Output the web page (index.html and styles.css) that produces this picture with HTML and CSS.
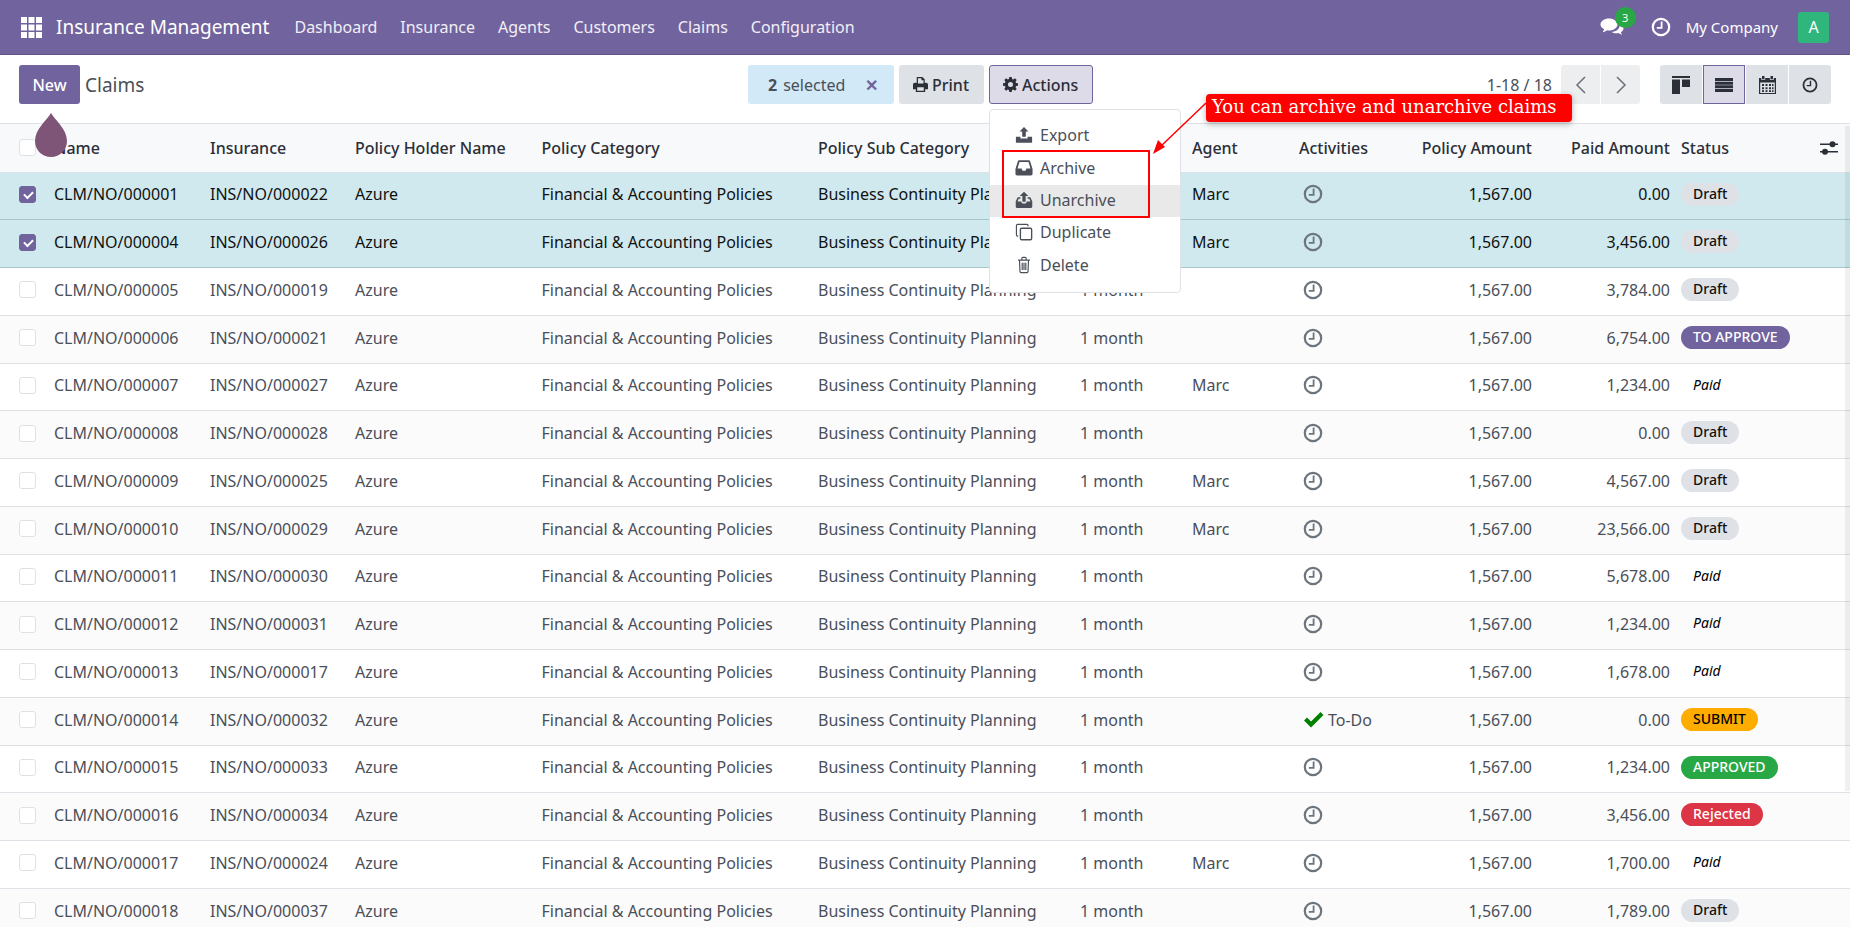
FILE: index.html
```html
<!DOCTYPE html>
<html lang="en">
<head>
    <meta charset="UTF-8">
    <title>Claims - Insurance Management</title>
    <link rel="stylesheet" href="styles.css">
</head>
<body>

<svg class="icon-defs" width="0" height="0">
    <symbol id="i-clock" viewBox="0 0 20 20"><circle cx="10" cy="10" r="8.2" fill="none" stroke="currentColor" stroke-width="2.2"/><path d="M10.600 4.600v6.200H5.800" fill="none" stroke="currentColor" stroke-width="1.800"/></symbol>
    <symbol id="i-export" viewBox="0 0 20 20"><path fill="currentColor" d="M10 1l5 5h-3v6H8V6H5zM1 12h5v2h8v-2h5v6.500H1z"/></symbol>
    <symbol id="i-archive" viewBox="0 0 20 20"><path fill="currentColor" fill-rule="evenodd" d="M5 1.500h10c1 0 1.500.5 2 1.500l2.500 8v5.500c0 1-.8 1.800-1.800 1.800H2.300c-1 0-1.800-.8-1.800-1.800V11L3 3c.4-1 1-1.500 2-1.500zM5 3.300L2.800 10.500h4.400l1.300 2.500h3l1.300-2.500h4.400L15 3.300z"/></symbol>
    <symbol id="i-unarchive" viewBox="0 0 20 20"><path fill="currentColor" d="M10 .8l4.800 4.700h-3V12H8.200V5.500h-3zM.8 11.500L3 7h3v1.700H4.200l-1.500 3h4.100l1.300 2.300h3.800l1.300-2.300h4.100l-1.500-3H14V7h3l2.200 4.500v5.800c0 .9-.8 1.700-1.700 1.700h-15c-.9 0-1.700-.8-1.700-1.700z"/></symbol>
    <symbol id="i-copy" viewBox="0 0 20 20"><path fill="none" stroke="currentColor" stroke-width="1.300" d="M14.500 3.500V2.800c0-.7-.5-1.200-1.200-1.200H3c-.8 0-1.400.6-1.400 1.400v10.300c0 .7.500 1.200 1.200 1.200h.8"/><rect x="6" y="5.800" width="12.500" height="12.800" rx="1.400" fill="none" stroke="currentColor" stroke-width="1.500"/></symbol>
    <symbol id="i-trash" viewBox="0 0 20 20"><path fill="none" stroke="currentColor" stroke-width="1.300" d="M3.500 4.500h13M5 4.500l.5 12.500c0 .9.500 1.500 1.300 1.500h6.400c.8 0 1.300-.6 1.300-1.500l.5-12.500M7.600 4.500V2.800c0-.7.400-1.200.9-1.200h3c.5 0 .9.500.9 1.200v1.700M8 7.500v8M10 7.500v8M12 7.500v8"/></symbol>
</svg>

<header class="navbar">
    <svg class="apps-icon" width="21" height="21" viewBox="0 0 21 21"><path fill="#fff" d="M0 0h6v6H0zM7.500 0h6v6h-6zM15 0h6v6h-6zM0 7.500h6v6H0zM7.500 7.500h6v6h-6zM15 7.500h6v6h-6zM0 15h6v6H0zM7.500 15h6v6h-6zM15 15h6v6h-6z"/></svg>
    <span class="brand">Insurance Management</span>
    <nav class="menu">
        <a>Dashboard</a>
        <a>Insurance</a>
        <a>Agents</a>
        <a>Customers</a>
        <a>Claims</a>
        <a>Configuration</a>
    </nav>
    <div class="systray">
        <span class="chat">
            <svg width="24" height="20" viewBox="0 0 24 20"><path fill="#fff" d="M9 1.500c4.700 0 8.500 2.700 8.500 6s-3.800 6-8.500 6c-.7 0-1.400-.1-2-.2-1.200 1-2.700 1.700-4.500 1.900.8-.9 1.400-1.900 1.700-3C2 11.100.5 9.400.5 7.500c0-3.300 3.800-6 8.500-6z"/><path fill="#fff" d="M19 6.500c2.700.8 4.500 2.700 4.500 4.800 0 1.600-1 3-2.700 4 .2.900.8 1.800 1.500 2.500-1.600-.2-2.900-.8-3.900-1.700-.6.100-1.300.2-1.900.2-1.900 0-3.600-.5-4.900-1.300 4.700-.3 8-3.100 8-6.500 0-.9-.2-1.700-.6-2.500z"/></svg>
            <span class="chat-badge">3</span>
        </span>
        <svg class="systray-clock" width="20" height="20"><use href="#i-clock"/></svg>
        <span class="company">My Company</span>
        <span class="avatar">A</span>
    </div>
</header>

<section class="control-panel">
    <div class="cp-left">
        <button class="btn btn-new">New</button>
        <span class="crumb">Claims</span>
    </div>
    <div class="cp-middle">
        <div class="selected-box"><b>2</b> selected <span class="selected-x">✕</span></div>
        <button class="btn btn-gray">
            <svg width="15" height="15" viewBox="0 0 16 16"><path fill="currentColor" fill-rule="evenodd" d="M4 0h6l2.500 2.500V6H14c1.100 0 2 .9 2 2v5h-3v3H3v-3H0V8c0-1.100.9-2 2-2h2zM5.300 1.300V7h5.900V3.500H9V1.300zM4.500 11v3.700h7V11z"/></svg>
            Print
        </button>
        <button class="btn btn-actions">
            <svg width="15" height="15" viewBox="0 0 16 16"><path fill="currentColor" fill-rule="evenodd" d="M6.700 0h2.600l.4 2.100 1.200.5L12.700 1.400l1.900 1.900-1.200 1.800.5 1.200 2.100.4v2.600l-2.100.4-.5 1.200 1.200 1.800-1.900 1.900-1.800-1.200-1.200.5-.4 2.100H6.700l-.4-2.100-1.200-.5-1.800 1.200-1.900-1.900 1.200-1.800-.5-1.200L0 9.300V6.700l2.100-.4.5-1.200-1.200-1.800 1.900-1.900 1.800 1.200 1.200-.5zM8 5.300a2.700 2.700 0 1 0 0 5.400 2.700 2.700 0 0 0 0-5.400z"/></svg>
            Actions
        </button>
    </div>
    <div class="cp-right">
        <span class="pager-text">1-18 / 18</span>
        <div class="pager">
            <button><svg width="12" height="20" viewBox="0 0 12 20"><path d="M10 2L2 10l8 8" fill="none" stroke="currentColor" stroke-width="1.500"/></svg></button>
            <button><svg width="12" height="20" viewBox="0 0 12 20"><path d="M2 2l8 8-8 8" fill="none" stroke="currentColor" stroke-width="1.500"/></svg></button>
        </div>
        <div class="views">
            <button><svg width="18" height="18" viewBox="0 0 18 18"><path fill="currentColor" d="M0 0h18v2H0zM0 3.500h8V18H0zM10 3.500h8V11h-8z"/></svg></button>
            <button class="active"><svg width="18" height="14" viewBox="0 0 18 14"><path fill="currentColor" d="M0 0h18v3H0zM0 3.700h18v3H0zM0 7.300h18v3H0zM0 11h18v3H0z"/></svg></button>
            <button><svg width="17" height="18" viewBox="0 0 17 18"><path fill="currentColor" fill-rule="evenodd" d="M3 0h2.500v3H3zM11.500 0H14v3h-2.500zM0 2h2.200v1.800h4V2h4.600v1.800h4V2H17v16H0zM1.200 6.500V17h14.600V6.500zM3 8h2v2H3zM6.500 8h2v2h-2zM10 8h2v2h-2zM13 8h1.500v2H13zM3 11.200h2v2H3zM6.500 11.200h2v2h-2zM10 11.200h2v2h-2zM13 11.200h1.500v2H13zM3 14.300h2v1.700H3zM6.500 14.300h2v1.700h-2zM10 14.300h2v1.700h-2zM13 14.300h1.500v1.700H13z"/></svg></button>
            <button><svg width="16" height="16"><use href="#i-clock"/></svg></button>
        </div>
    </div>
</section>

<main class="list-wrap">
    <table class="list">
        <colgroup>
            <col class="c-check"><col class="c-name"><col class="c-ins"><col class="c-holder"><col class="c-cat"><col class="c-sub"><col class="c-period"><col class="c-agent"><col class="c-act"><col class="c-amount"><col class="c-paid"><col>
        </colgroup>
        <thead>
            <tr>
                <th class="check-cell"><span class="check"></span></th>
                <th>Name</th>
                <th>Insurance</th>
                <th>Policy Holder Name</th>
                <th>Policy Category</th>
                <th>Policy Sub Category</th>
                <th>Period</th>
                <th>Agent</th>
                <th>Activities</th>
                <th class="num">Policy Amount</th>
                <th class="num">Paid Amount</th>
                <th class="status-head">Status
                    <svg class="options" width="18" height="16" viewBox="0 0 18 16"><path fill="currentColor" d="M0 3.500h18v1.400H0zM0 11h18v1.400H0z"/><circle cx="12.500" cy="4.200" r="3" fill="currentColor"/><circle cx="5" cy="11.700" r="3" fill="currentColor"/></svg>
                </th>
            </tr>
        </thead>
        <tbody>
            <tr class="sel"><td class="check-cell"><span class="check on"></span></td><td>CLM/NO/000001</td><td>INS/NO/000022</td><td>Azure</td><td>Financial &amp; Accounting Policies</td><td>Business Continuity Planning</td><td>1 month</td><td>Marc</td><td><svg class="act"><use href="#i-clock"/></svg></td><td class="num">1,567.00</td><td class="num">0.00</td><td><span class="tag tag-draft">Draft</span></td></tr>
            <tr class="sel"><td class="check-cell"><span class="check on"></span></td><td>CLM/NO/000004</td><td>INS/NO/000026</td><td>Azure</td><td>Financial &amp; Accounting Policies</td><td>Business Continuity Planning</td><td>1 month</td><td>Marc</td><td><svg class="act"><use href="#i-clock"/></svg></td><td class="num">1,567.00</td><td class="num">3,456.00</td><td><span class="tag tag-draft">Draft</span></td></tr>
            <tr><td class="check-cell"><span class="check"></span></td><td>CLM/NO/000005</td><td>INS/NO/000019</td><td>Azure</td><td>Financial &amp; Accounting Policies</td><td>Business Continuity Planning</td><td>1 month</td><td></td><td><svg class="act"><use href="#i-clock"/></svg></td><td class="num">1,567.00</td><td class="num">3,784.00</td><td><span class="tag tag-draft">Draft</span></td></tr>
            <tr><td class="check-cell"><span class="check"></span></td><td>CLM/NO/000006</td><td>INS/NO/000021</td><td>Azure</td><td>Financial &amp; Accounting Policies</td><td>Business Continuity Planning</td><td>1 month</td><td></td><td><svg class="act"><use href="#i-clock"/></svg></td><td class="num">1,567.00</td><td class="num">6,754.00</td><td><span class="tag tag-approve">TO APPROVE</span></td></tr>
            <tr><td class="check-cell"><span class="check"></span></td><td>CLM/NO/000007</td><td>INS/NO/000027</td><td>Azure</td><td>Financial &amp; Accounting Policies</td><td>Business Continuity Planning</td><td>1 month</td><td>Marc</td><td><svg class="act"><use href="#i-clock"/></svg></td><td class="num">1,567.00</td><td class="num">1,234.00</td><td><span class="tag tag-paid">Paid</span></td></tr>
            <tr><td class="check-cell"><span class="check"></span></td><td>CLM/NO/000008</td><td>INS/NO/000028</td><td>Azure</td><td>Financial &amp; Accounting Policies</td><td>Business Continuity Planning</td><td>1 month</td><td></td><td><svg class="act"><use href="#i-clock"/></svg></td><td class="num">1,567.00</td><td class="num">0.00</td><td><span class="tag tag-draft">Draft</span></td></tr>
            <tr><td class="check-cell"><span class="check"></span></td><td>CLM/NO/000009</td><td>INS/NO/000025</td><td>Azure</td><td>Financial &amp; Accounting Policies</td><td>Business Continuity Planning</td><td>1 month</td><td>Marc</td><td><svg class="act"><use href="#i-clock"/></svg></td><td class="num">1,567.00</td><td class="num">4,567.00</td><td><span class="tag tag-draft">Draft</span></td></tr>
            <tr><td class="check-cell"><span class="check"></span></td><td>CLM/NO/000010</td><td>INS/NO/000029</td><td>Azure</td><td>Financial &amp; Accounting Policies</td><td>Business Continuity Planning</td><td>1 month</td><td>Marc</td><td><svg class="act"><use href="#i-clock"/></svg></td><td class="num">1,567.00</td><td class="num">23,566.00</td><td><span class="tag tag-draft">Draft</span></td></tr>
            <tr><td class="check-cell"><span class="check"></span></td><td>CLM/NO/000011</td><td>INS/NO/000030</td><td>Azure</td><td>Financial &amp; Accounting Policies</td><td>Business Continuity Planning</td><td>1 month</td><td></td><td><svg class="act"><use href="#i-clock"/></svg></td><td class="num">1,567.00</td><td class="num">5,678.00</td><td><span class="tag tag-paid">Paid</span></td></tr>
            <tr><td class="check-cell"><span class="check"></span></td><td>CLM/NO/000012</td><td>INS/NO/000031</td><td>Azure</td><td>Financial &amp; Accounting Policies</td><td>Business Continuity Planning</td><td>1 month</td><td></td><td><svg class="act"><use href="#i-clock"/></svg></td><td class="num">1,567.00</td><td class="num">1,234.00</td><td><span class="tag tag-paid">Paid</span></td></tr>
            <tr><td class="check-cell"><span class="check"></span></td><td>CLM/NO/000013</td><td>INS/NO/000017</td><td>Azure</td><td>Financial &amp; Accounting Policies</td><td>Business Continuity Planning</td><td>1 month</td><td></td><td><svg class="act"><use href="#i-clock"/></svg></td><td class="num">1,567.00</td><td class="num">1,678.00</td><td><span class="tag tag-paid">Paid</span></td></tr>
            <tr><td class="check-cell"><span class="check"></span></td><td>CLM/NO/000014</td><td>INS/NO/000032</td><td>Azure</td><td>Financial &amp; Accounting Policies</td><td>Business Continuity Planning</td><td>1 month</td><td></td><td><span class="todo"><svg width="20" height="16" viewBox="0 0 20 16"><path fill="#008000" d="M0 8.500l3-3 4 4L16.500 0l3 3L7 15.500z"/></svg> To-Do</span></td><td class="num">1,567.00</td><td class="num">0.00</td><td><span class="tag tag-submit">SUBMIT</span></td></tr>
            <tr><td class="check-cell"><span class="check"></span></td><td>CLM/NO/000015</td><td>INS/NO/000033</td><td>Azure</td><td>Financial &amp; Accounting Policies</td><td>Business Continuity Planning</td><td>1 month</td><td></td><td><svg class="act"><use href="#i-clock"/></svg></td><td class="num">1,567.00</td><td class="num">1,234.00</td><td><span class="tag tag-approved">APPROVED</span></td></tr>
            <tr><td class="check-cell"><span class="check"></span></td><td>CLM/NO/000016</td><td>INS/NO/000034</td><td>Azure</td><td>Financial &amp; Accounting Policies</td><td>Business Continuity Planning</td><td>1 month</td><td></td><td><svg class="act"><use href="#i-clock"/></svg></td><td class="num">1,567.00</td><td class="num">3,456.00</td><td><span class="tag tag-rejected">Rejected</span></td></tr>
            <tr><td class="check-cell"><span class="check"></span></td><td>CLM/NO/000017</td><td>INS/NO/000024</td><td>Azure</td><td>Financial &amp; Accounting Policies</td><td>Business Continuity Planning</td><td>1 month</td><td>Marc</td><td><svg class="act"><use href="#i-clock"/></svg></td><td class="num">1,567.00</td><td class="num">1,700.00</td><td><span class="tag tag-paid">Paid</span></td></tr>
            <tr><td class="check-cell"><span class="check"></span></td><td>CLM/NO/000018</td><td>INS/NO/000037</td><td>Azure</td><td>Financial &amp; Accounting Policies</td><td>Business Continuity Planning</td><td>1 month</td><td></td><td><svg class="act"><use href="#i-clock"/></svg></td><td class="num">1,567.00</td><td class="num">1,789.00</td><td><span class="tag tag-draft">Draft</span></td></tr>
        </tbody>
    </table>
    <div class="scroll-thumb"></div>
</main>

<!-- menu and the annotation lie over the table -->
<div class="dropdown">
    <a><svg><use href="#i-export"/></svg>Export</a>
    <a><svg><use href="#i-archive"/></svg>Archive</a>
    <a class="hover"><svg><use href="#i-unarchive"/></svg>Unarchive</a>
    <a><svg><use href="#i-copy"/></svg>Duplicate</a>
    <a><svg><use href="#i-trash"/></svg>Delete</a>
</div>
<div class="red-box"></div>
<div class="note">You can archive and unarchive claims</div>
<svg class="note-arrow" width="70" height="70" viewBox="0 0 70 70">
    <path d="M56 3L10 47" stroke="#f00" stroke-width="1.500" fill="none"/>
    <path d="M3 54l5-14 7 7z" fill="#f00"/>
</svg>
<svg class="drop" width="32" height="44" viewBox="0 0 32 44"><path fill="#7f5577" d="M16 0c4 7 16 16 16 28 0 9-7 16-16 16S0 37 0 28C0 16 12 7 16 0z"/></svg>

</body>
</html>
```

FILE: styles.css
```css
* {
    box-sizing: border-box;
}
html, body {
    height: 100%;
}
body {
    margin: 0;
    overflow: hidden;
    background-color: #fff;
    color: #4a4f59;
    font-family: "Noto Sans", sans-serif;
    font-size: 16px;
}
.icon-defs {
    position: absolute;
}
button {
    font-family: inherit;
    font-size: inherit;
    cursor: pointer;
}

/* top bar */
.navbar {
    display: flex;
    align-items: center;
    height: 55px;
    padding-left: 21px;
    background-color: #71639e;
    border-bottom: 1px solid #5f5385;
    color: #fff;
}
.brand {
    margin-left: 14px;
    font-size: 19px;
}
.menu {
    display: flex;
    gap: 23px;
    margin-left: 25px;
    color: #f1eff6;
}
.systray {
    display: flex;
    align-items: center;
    margin-left: auto;
    padding-right: 21px;
    font-size: 15px;
}
.chat {
    position: relative;
    display: flex;
    margin-right: 27px;
}
.chat-badge {
    position: absolute;
    top: -10px;
    left: 15px;
    width: 21px;
    height: 21px;
    border-radius: 50%;
    background-color: #28a745;
    font-size: 11px;
    line-height: 21px;
    text-align: center;
}
.company {
    margin-left: 15px;
}
.avatar {
    width: 31px;
    height: 31px;
    margin-left: 20px;
    border-radius: 3px;
    background-color: #2eb67d;
    font-size: 16px;
    line-height: 31px;
    text-align: center;
}

/* control panel */
.control-panel {
    display: flex;
    align-items: flex-start;
    height: 68px;
    padding: 10px 19px 0;
}
.cp-left {
    display: flex;
    align-items: center;
    width: 729px;
}
.crumb {
    margin-left: 5px;
    font-size: 19px;
}
.cp-middle {
    display: flex;
    gap: 5px;
}
.cp-right {
    display: flex;
    margin-left: auto;
    align-items: center;
}
.btn {
    display: flex;
    align-items: center;
    gap: 4px;
    height: 39px;
    padding: 0 13px;
    border: 1px solid transparent;
    border-radius: 3px;
    color: #2b2f38;
    font-weight: 500;
}
.btn-new {
    width: 61px;
    justify-content: center;
    background-color: #71639e;
    color: #fff;
}
.btn-gray {
    width: 85px;
    background-color: #dee2e6;
}
.btn-actions {
    width: 104px;
    background-color: #dedbe8;
    border-color: #71639e;
}
.selected-box {
    display: flex;
    align-items: center;
    gap: 6px;
    width: 146px;
    height: 39px;
    padding-left: 20px;
    border-radius: 3px;
    background-color: #d2e9f7;
}
.selected-x {
    margin-left: 14px;
    color: #71639e;
    font-weight: 700;
}
.pager-text {
    margin-right: 9px;
}
.pager, .views {
    display: flex;
    gap: 1px;
}
.pager button, .views button {
    display: flex;
    align-items: center;
    justify-content: center;
    height: 39px;
    padding: 0;
    border: 1px solid transparent;
}
.pager button {
    width: 39px;
    background-color: #eceef0;
    color: #6b7078;
}
.pager button:first-child, .views button:first-child {
    border-radius: 3px 0 0 3px;
}
.pager button:last-child, .views button:last-child {
    border-radius: 0 3px 3px 0;
}
.views {
    margin-left: 20px;
}
.views button {
    width: 42px;
    background-color: #dee2e6;
    color: #2b2f38;
}
.views button.active {
    background-color: #dedbe8;
    border-color: #71639e;
}

/* list */
.list-wrap {
    position: relative;
    border-top: 1px solid #dee2e6;
}
.list {
    width: 100%;
    border-collapse: collapse;
    table-layout: fixed;
}
.c-check { width: 48.500px; }
.c-name { width: 156px; }
.c-ins { width: 145px; }
.c-holder { width: 186.500px; }
.c-cat { width: 276.500px; }
.c-sub { width: 262px; }
.c-period { width: 112px; }
.c-agent { width: 107px; }
.c-act { width: 104.500px; }
.c-amount { width: 139.500px; }
.c-paid { width: 138px; }
.list th, .list td {
    height: 47.750px;
    padding: 0 5.500px 3px;
    border-bottom: 1px solid #dee2e6;
    text-align: left;
    white-space: nowrap;
    overflow: hidden;
}
.list th {
    height: 48px;
    padding-bottom: 0;
    background-color: #f8f9fb;
    color: #2b2f38;
    font-weight: 500;
}
.list tbody tr:nth-child(even) {
    background-color: #fbfbfb;
}
.list .num {
    text-align: right;
}
.list tbody tr.sel {
    background-color: #cfe9ee;
    color: #111;
}
.list tbody tr.sel td {
    border-bottom-color: #a9c6cc;
}
.list .check-cell {
    padding-left: 19px;
}
.check {
    display: block;
    width: 17px;
    height: 17px;
    border: 1px solid #dee2e6;
    border-radius: 3px;
    background-color: #fff;
}
.check.on {
    position: relative;
    background-color: #71639e;
    border-color: #71639e;
}
.check.on::after {
    content: "";
    position: absolute;
    left: 4px;
    top: 4px;
    width: 7px;
    height: 4px;
    border-left: 2px solid #fff;
    border-bottom: 2px solid #fff;
    transform: rotate(-45deg);
}
.act {
    display: block;
    width: 20px;
    height: 20px;
    margin-left: 4px;
    color: #6c757d;
}
.todo {
    display: flex;
    align-items: center;
    gap: 4px;
    margin-left: 5px;
}
.status-head {
    position: relative;
}
.options {
    position: absolute;
    right: 12px;
    top: 16px;
}
.tag {
    display: inline-block;
    height: 23px;
    margin-bottom: 1px;
    padding: 0 12px;
    border-radius: 12px;
    font-size: 14px;
    font-weight: 500;
    line-height: 22px;
    vertical-align: middle;
}
.tag-draft {
    background-color: #dee2e6;
    color: #111;
}
.tag-approve {
    background-color: #71639e;
    color: #fff;
}
.tag-paid {
    color: #000;
    font-style: italic;
    font-weight: 400;
}
.tag-submit {
    background-color: #ffac00;
    color: #000;
}
.tag-approved {
    background-color: #28a745;
    color: #fff;
}
.tag-rejected {
    background-color: #dc3545;
    color: #fff;
}
.scroll-thumb {
    position: absolute;
    top: 2px;
    right: 0;
    width: 5px;
    height: 665px;
    background-color: rgba(0, 0, 0, 0.06);
}

/* things that lie over the table */
.dropdown {
    position: absolute;
    left: 989px;
    top: 109px;
    width: 192px;
    padding: 10px 0;
    border: 1px solid #dee2e6;
    border-radius: 4px;
    background-color: #fff;
}
.dropdown a {
    display: flex;
    align-items: center;
    gap: 7px;
    height: 32.400px;
    padding: 0 0 2px 25px;
}
.dropdown a.hover {
    background-color: #e9e9e9;
}
.dropdown svg {
    width: 18px;
    height: 18px;
}
.red-box {
    position: absolute;
    left: 1002px;
    top: 150px;
    width: 148px;
    height: 68px;
    border: 2px solid #f00;
}
.note {
    position: absolute;
    left: 1206px;
    top: 94px;
    width: 366px;
    height: 28px;
    padding-left: 6px;
    border-radius: 4px;
    background-color: #f00;
    box-shadow: 0 2px 6px rgba(0, 0, 0, 0.3);
    color: #fff;
    font-family: "DejaVu Serif", serif;
    font-size: 18px;
    line-height: 25px;
    white-space: nowrap;
}
.note-arrow {
    position: absolute;
    left: 1150px;
    top: 100px;
}
.drop {
    position: absolute;
    left: 35px;
    top: 113px;
}
```
